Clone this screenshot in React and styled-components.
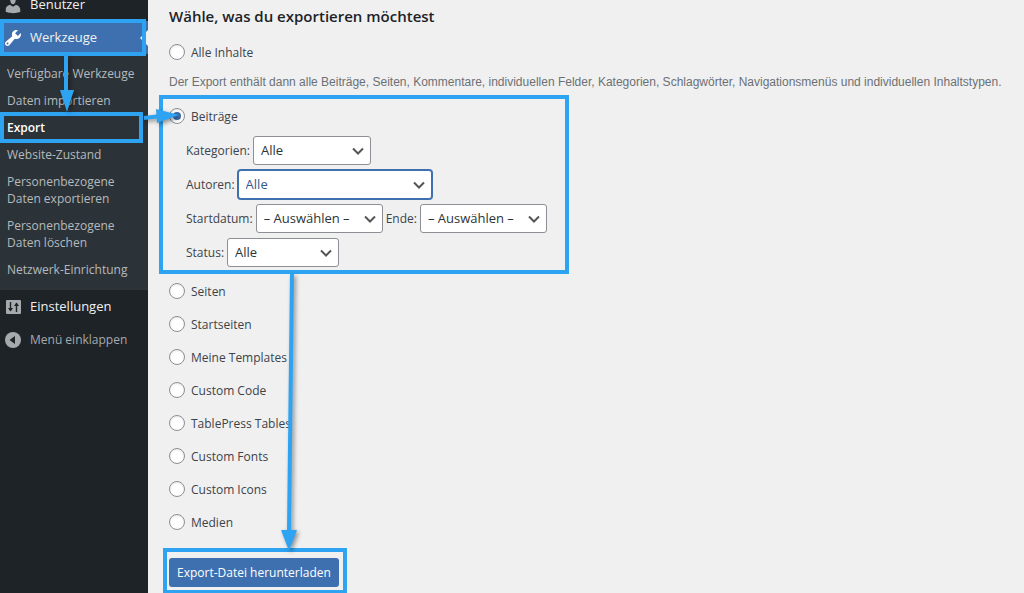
import React from "react";
import styled, { createGlobalStyle, css } from "styled-components";

const ACCENT = "#2ea3f2";
const BLUE = "#3e70b0";
const FONT = `"Open Sans", "Noto Sans", sans-serif`;

const GlobalStyle = createGlobalStyle`
  * { box-sizing: border-box; }
  body {
    margin: 0;
    background: #f0f0f0;
    color: #3c434a;
    font: 12px/17px ${FONT};
  }
`;

const Page = styled.div`
  position: relative;
  display: flex;
  min-height: 100vh;
  overflow: hidden;
`;

const highlight = css`
  position: relative;
  &::after {
    content: "";
    position: absolute;
    border: 4px solid ${ACCENT};
    pointer-events: none;
  }
`;

/* Sidebar */
const Sidebar = styled.nav`
  flex: 0 0 148px;
  margin-top: -12px;
  background: #1d2327;
`;

const MenuLink = styled.a`
  display: flex;
  align-items: center;
  gap: 7px;
  width: 100%;
  height: 33px;
  padding: 0 0 0 3px;
  border: 0;
  background: ${(p) => (p.$active ? BLUE : "transparent")};
  color: ${(p) => (p.$muted ? "#a7aaad" : "#f0f0f1")};
  font: ${(p) => (p.$muted ? "12px" : "13px")}/17px ${FONT};
  text-decoration: none;
  ${(p) =>
    p.$active &&
    css`
      ${highlight}
      &::before {
        content: "";
        position: absolute;
        right: 0;
        border: 8px solid transparent;
        border-right-color: #f0f0f0;
        border-left-width: 0;
      }
      &::after { inset: -2px 2px -2px 0; }
    `}
`;

const MenuIcon = styled.svg`
  flex: none;
  width: 20px;
  height: 20px;
  fill: ${(p) => (p.$light ? "#fff" : "#a7aaad")};
`;

const SubMenu = styled.ul`
  margin: 0;
  padding: 6px 0 7px;
  list-style: none;
  background: #2c3338;
`;

const SubItem = styled.li`
  padding: 5px 7px;
  ${(p) =>
    p.$current &&
    css`
      ${highlight}
      &::after { inset: -2px 5px -2px 0; }
    `}
`;

const SubLink = styled.a`
  display: block;
  color: ${(p) => (p.$current ? "#fff" : "#b5babd")};
  font-weight: ${(p) => (p.$current ? 600 : 400)};
  text-decoration: none;
`;

/* Export form */
const Main = styled.main`
  flex: 1;
  min-width: 0;
  padding: 5px 0 0 21px;
`;

const Title = styled.h2`
  margin: 0 0 14px;
  color: #1d2327;
  font-size: 15px;
  line-height: 22px;
  font-weight: 600;
`;

const Choice = styled.label`
  display: flex;
  align-items: center;
  gap: 6px;
  width: fit-content;
  height: 22px;
`;

const Radio = styled.input`
  appearance: none;
  display: grid;
  place-items: center;
  flex: none;
  width: 16px;
  height: 16px;
  margin: 0;
  border: 1px solid #8c8f94;
  border-radius: 50%;
  background: #fff;
  box-shadow: inset 0 1px 2px rgba(0, 0, 0, 0.1);
  &:checked::before {
    content: "";
    width: 8px;
    height: 8px;
    border-radius: 50%;
    background: ${BLUE};
  }
`;

const Description = styled.p`
  margin: 11px 0 14px;
  color: #6c7075;
  font-family: "Liberation Sans", sans-serif;
  white-space: nowrap;
`;

const PostsGroup = styled.section`
  ${highlight}
  width: fit-content;
  padding-bottom: 8px;
  &::after { inset: -10px -22px 0 -10px; }
`;

const Filters = styled.div`
  display: flex;
  flex-direction: column;
  gap: 6px;
  padding: 9px 0 0 17px;
`;

const FilterRow = styled.div`
  display: flex;
  align-items: center;
  gap: 3px;
  height: 28px;
`;

const SelectBox = styled.span`
  position: relative;
  display: flex;
  width: ${(p) => p.$width}px;
`;

const Select = styled.select`
  appearance: none;
  width: 100%;
  height: 29px;
  margin: 0;
  padding: 0 24px 0 7px;
  border: 1px solid ${(p) => (p.$focused ? BLUE : "#8c8f94")};
  border-radius: 3px;
  box-shadow: ${(p) => (p.$focused ? `0 0 0 1px ${BLUE}` : "none")};
  background: #fff;
  color: ${(p) => (p.$focused ? "#34588f" : "#2c3338")};
  font: 13px/17px ${FONT};
`;

const Chevron = styled.svg`
  position: absolute;
  right: 7px;
  top: 9px;
  width: 12px;
  height: 12px;
  fill: none;
  stroke: #555;
  stroke-width: 2;
  pointer-events: none;
`;

const TypeList = styled.div`
  display: flex;
  flex-direction: column;
  gap: 11px;
  padding: 6px 0 25px;
`;

const Submit = styled.div`
  ${highlight}
  width: fit-content;
  &::after { inset: -10px -8px -7px -6px; }
`;

const Button = styled.button`
  display: block;
  height: 29px;
  padding: 0 8px;
  border: 0;
  border-radius: 3px;
  background: ${BLUE};
  color: #fff;
  font: 12px/17px ${FONT};
`;

const Arrows = styled.svg`
  position: absolute;
  left: 0;
  top: 0;
  width: 400px;
  height: 593px;
  pointer-events: none;
  filter: drop-shadow(2px 2px 2px rgba(0, 0, 0, 0.4));
`;

const ICONS = {
  users: (
    <path d="M10 9.25c-2.27 0-2.73-3.44-2.73-3.44C7 4.02 7.82 2 9.97 2c2.16 0 2.98 2.02 2.71 3.81 0 0-.41 3.44-2.68 3.44zm0 2.57L12.72 10c2.39 0 4.52 2.33 4.52 4.53v2.49s-3.65 1.13-7.24 1.13c-3.65 0-7.24-1.13-7.24-1.13v-2.49c0-2.25 1.94-4.48 4.47-4.48z" />
  ),
  tools: (
    <path d="M16.68 9.77c-1.34 1.34-3.3 1.67-4.95.99l-5.41 6.52c-.99.99-2.59.99-3.58 0s-.99-2.59 0-3.57l6.52-5.42c-.68-1.65-.35-3.61.99-4.95 1.28-1.28 3.12-1.62 4.72-1.06l-2.89 2.89 2.82 2.82 2.86-2.87c.53 1.58.18 3.39-1.08 4.65zM3.81 16.21c.4.39 1.04.39 1.43 0 .4-.4.4-1.04 0-1.43-.39-.4-1.03-.4-1.43 0-.39.39-.39 1.03 0 1.43z" />
  ),
  settings: (
    <>
      <rect x="3" y="3" width="15" height="14" rx="1" />
      <path
        d="M7.5 5v9M13.5 6v9"
        fill="none"
        stroke="#1d2327"
        strokeWidth="1.4"
      />
      <path d="M5 11h5l-2.500 3.500zM11 9h5l-2.500-3.500z" fill="#1d2327" />
    </>
  ),
  collapse: (
    <>
      <circle cx="10" cy="10" r="8" />
      <path d="M12 6v8L6.500 10z" fill="#1d2327" />
    </>
  ),
};

function Icon({ name, light }) {
  return (
    <MenuIcon viewBox="0 0 20 20" $light={light} aria-hidden="true">
      {ICONS[name]}
    </MenuIcon>
  );
}

function Field({ id, label, value = "Alle", width, focused }) {
  return (
    <>
      <label htmlFor={id}>{label}</label>
      <SelectBox $width={width}>
        <Select id={id} $focused={focused}>
          <option>{value}</option>
        </Select>
        <Chevron viewBox="0 0 12 12" aria-hidden="true">
          <path d="M1 3.500l5 5 5-5" />
        </Chevron>
      </SelectBox>
    </>
  );
}

function TypeChoice({ children, checked }) {
  return (
    <Choice>
      <Radio type="radio" name="content" defaultChecked={checked} />
      {children}
    </Choice>
  );
}

const SUB_ITEMS = [
  "Verfügbare Werkzeuge",
  "Daten importieren",
  "Export",
  "Website-Zustand",
  "Personenbezogene Daten exportieren",
  "Personenbezogene Daten löschen",
  "Netzwerk-Einrichtung",
];

const TYPES = [
  "Seiten",
  "Startseiten",
  "Meine Templates",
  "Custom Code",
  "TablePress Tables",
  "Custom Fonts",
  "Custom Icons",
  "Medien",
];

export default function App() {
  return (
    <Page>
      <GlobalStyle />
      <Sidebar>
        <MenuLink href="#benutzer">
          <Icon name="users" />
          Benutzer
        </MenuLink>
        <MenuLink href="#werkzeuge" $active>
          <Icon name="tools" light />
          Werkzeuge
        </MenuLink>
        <SubMenu>
          {SUB_ITEMS.map((item) => (
            <SubItem key={item} $current={item === "Export"}>
              <SubLink href="#werkzeuge" $current={item === "Export"}>
                {item}
              </SubLink>
            </SubItem>
          ))}
        </SubMenu>
        <MenuLink href="#einstellungen">
          <Icon name="settings" />
          Einstellungen
        </MenuLink>
        <MenuLink as="button" type="button" $muted>
          <Icon name="collapse" />
          Menü einklappen
        </MenuLink>
      </Sidebar>
      <Main>
        <Title>Wähle, was du exportieren möchtest</Title>
        <TypeChoice>Alle Inhalte</TypeChoice>
        <Description>
          Der Export enthält dann alle Beiträge, Seiten, Kommentare,
          individuellen Felder, Kategorien, Schlagwörter, Navigationsmenüs und
          individuellen Inhaltstypen.
        </Description>
        <PostsGroup>
          <TypeChoice checked>Beiträge</TypeChoice>
          <Filters>
            <FilterRow>
              <Field id="cat" label="Kategorien:" width={118} />
            </FilterRow>
            <FilterRow>
              <Field id="author" label="Autoren:" width={194} focused />
            </FilterRow>
            <FilterRow>
              <Field id="start" label="Startdatum:" value="– Auswählen –" width={127} />
              <Field id="end" label="Ende:" value="– Auswählen –" width={127} />
            </FilterRow>
            <FilterRow>
              <Field id="status" label="Status:" width={112} />
            </FilterRow>
          </Filters>
        </PostsGroup>
        <TypeList>
          {TYPES.map((type) => (
            <TypeChoice key={type}>{type}</TypeChoice>
          ))}
        </TypeList>
        <Submit>
          <Button type="button">Export-Datei herunterladen</Button>
        </Submit>
      </Main>
      <Arrows viewBox="0 0 400 593" fill={ACCENT} stroke={ACCENT} aria-hidden="true">
        <path d="M66 56v36" strokeWidth="4" />
        <path d="M60 90h14l-7 22z" stroke="none" />
        <path d="M144 118l17-2" strokeWidth="4" />
        <path d="M156 109l1 14 22-8z" stroke="none" />
        <path d="M292 274l-3 258" strokeWidth="4" />
        <path d="M281 530h16l-8 21z" stroke="none" />
      </Arrows>
    </Page>
  );
}
